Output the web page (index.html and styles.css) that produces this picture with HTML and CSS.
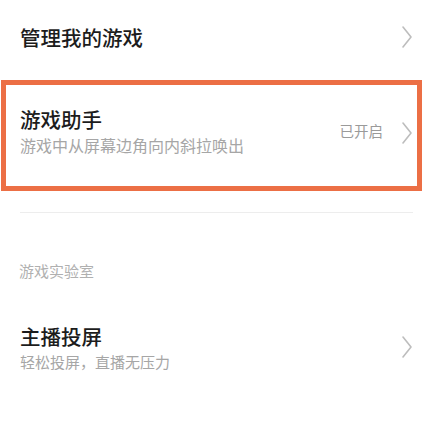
FILE: index.html
```html
<!DOCTYPE html>
<html lang="zh-CN">
<head>
    <meta charset="UTF-8">
    <meta name="viewport" content="width=device-width, initial-scale=1.0">
    <title>游戏设置</title>
    <link rel="stylesheet" href="styles.css">
</head>
<body>
    <div class="page">
        <div class="row row-top">
            <div class="title">管理我的游戏</div>
            <svg class="chevron" viewBox="0 0 10 22"><polyline points="1,1 9,11 1,21"/></svg>
        </div>

        <div class="highlight">
            <div class="texts">
                <div class="title">游戏助手</div>
                <div class="sub">游戏中从屏幕边角向内斜拉唤出</div>
            </div>
            <div class="right">
                <span class="state">已开启</span>
                <svg class="chevron" viewBox="0 0 10 22"><polyline points="1,1 9,11 1,21"/></svg>
            </div>
        </div>

        <div class="divider"></div>

        <div class="section">游戏实验室</div>

        <div class="row row-cast">
            <div class="texts">
                <div class="title">主播投屏</div>
                <div class="sub sub-small">轻松投屏，直播无压力</div>
            </div>
            <svg class="chevron" viewBox="0 0 10 22"><polyline points="1,1 9,11 1,21"/></svg>
        </div>
    </div>
</body>
</html>
```

FILE: styles.css
```css
body {
    margin: 0;
    background-color: #ffffff;
    font-family: "Noto Sans CJK SC", "Noto Sans", sans-serif;
}

.page {
    width: 444px;
    height: 424px;
    overflow: hidden;
}

.row {
    display: flex;
    align-items: center;
    justify-content: space-between;
    padding: 0 32px 0 20px;
}

.row-top {
    height: 74px;
}

.title {
    font-size: 20.5px;
    line-height: 30px;
    font-weight: 500;
    color: #1c1c1c;
}

.sub {
    font-size: 16px;
    line-height: 23px;
    color: #a6a6a6;
}

.sub-small {
    font-size: 15px;
    line-height: 22px;
}

.chevron {
    width: 10px;
    height: 22px;
    flex-shrink: 0;
}

.chevron polyline {
    fill: none;
    stroke: #bdbdbd;
    stroke-width: 1.6;
    stroke-linecap: round;
    stroke-linejoin: round;
}

.highlight {
    display: flex;
    align-items: center;
    justify-content: space-between;
    margin: 6px 22px 0 1px;
    padding: 19px 5px 29px 14px;
    border: 5px solid #ec6f45;
}

.right {
    display: flex;
    align-items: center;
    gap: 19px;
}

.right .chevron {
    margin-top: 5px;
}

.state {
    font-size: 14.5px;
    line-height: 20px;
    color: #9a9a9a;
}

.divider {
    height: 1px;
    margin: 21px 31px 0 20px;
    background-color: #ededed;
}

.section {
    margin: 47px 0 0 19px;
    font-size: 15px;
    line-height: 22px;
    color: #b0b0b0;
}

.row-cast {
    margin-top: 39px;
}
```
